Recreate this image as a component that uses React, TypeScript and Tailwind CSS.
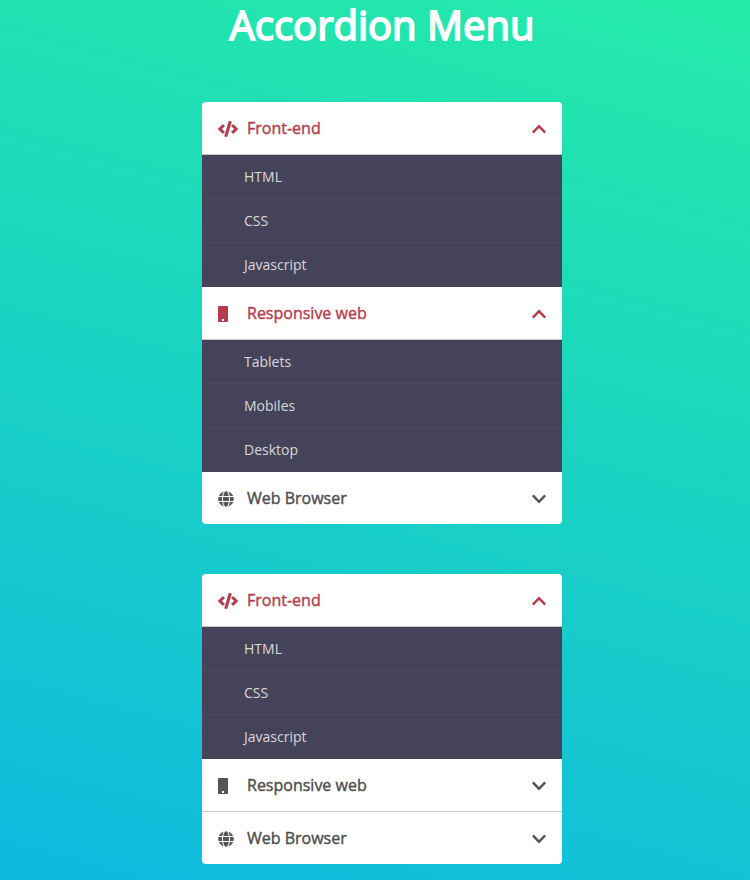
import React from 'react';
import { FaCode, FaGlobe, FaChevronDown, FaChevronUp } from 'react-icons/fa';

type Section = { title: string; icon: 'code' | 'mobile' | 'globe'; open: boolean; items: string[] };

const frontEnd: Section = { title: 'Front-end', icon: 'code', open: true, items: ['HTML', 'CSS', 'Javascript'] };
const responsive: Section = { title: 'Responsive web', icon: 'mobile', open: true, items: ['Tablets', 'Mobiles', 'Desktop'] };
const browser: Section = { title: 'Web Browser', icon: 'globe', open: false, items: [] };

function MobileIcon() {
  return (
    <svg width="10" height="16" viewBox="0 0 10 16" fill="currentColor">
      <path fillRule="evenodd" d="M.8 0h8.4A.8.8 0 0 1 10 .8v14.4a.8.8 0 0 1-.8.8H.8a.8.8 0 0 1-.8-.8V.8A.8.8 0 0 1 .8 0ZM4 13v2h2v-2Z" />
    </svg>
  );
}

const icons = {
  code: <FaCode className="h-4 w-5 stroke-current [stroke-width:12]" />,
  mobile: <MobileIcon />,
  globe: <FaGlobe size={16} />,
};

function Menu({ sections }: { sections: Section[] }) {
  return (
    <ul className="w-[360px] overflow-hidden rounded bg-white">
      {sections.map((s, i) => {
        const Chevron = s.open ? FaChevronUp : FaChevronDown;
        const last = i === sections.length - 1;
        return (
          <li key={s.title}>
            <div
              className={`flex items-center pl-4 pr-[15px] ${last ? 'h-[52px]' : 'h-[53px] border-b border-[#cccccc]'} ${s.open ? 'text-[#b63b4d]' : 'text-[#4d4d4d]'}`}
            >
              <span className={`flex w-[29px] items-center pt-0.5 ${s.open ? '' : 'text-[#555555]'}`}>{icons[s.icon]}</span>
              <span className="flex-1 text-base [-webkit-text-stroke:0.4px_currentColor]">{s.title}</span>
              <span className={`pt-0.5 ${s.open ? '' : 'text-[#555555]'}`}>
                <Chevron size={16} />
              </span>
            </div>
            {s.open && (
              <ul className="bg-[#444359] text-sm text-[#d9d9d9]">
                {s.items.map((t, j) => (
                  <li key={t} className={`flex h-11 items-center pl-[42px] ${j < 2 ? 'border-b border-[#4b4a5e]' : ''}`}>
                    {t}
                  </li>
                ))}
              </ul>
            )}
          </li>
        );
      })}
    </ul>
  );
}

export default function App() {
  return (
    <div className="h-[880px] bg-[linear-gradient(195deg,#25eba8_0%,#0fb9df_100%)] pl-[14px] font-['Open_Sans',sans-serif]">
      <div className="flex flex-col items-center">
        <h1 className="h-[102px] text-[40px] leading-[50px] text-white [-webkit-text-stroke:1.8px_currentColor]">Accordion Menu</h1>
        <Menu sections={[frontEnd, responsive, browser]} />
        <div className="h-[50px]" />
        <Menu sections={[frontEnd, { ...responsive, open: false }, browser]} />
      </div>
    </div>
  );
}
